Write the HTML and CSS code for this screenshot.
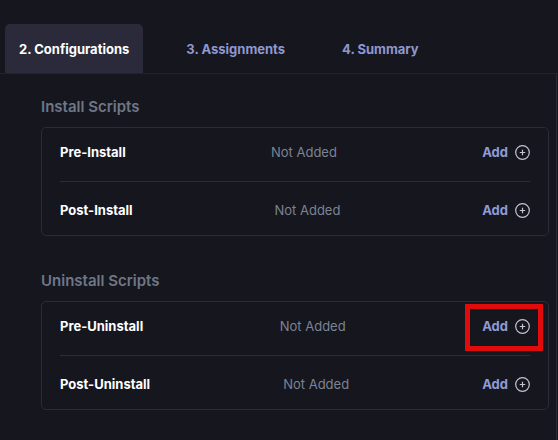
FILE: index.html
```html
<!DOCTYPE html>
<html>
<head>
<meta charset="utf-8">
<link rel="stylesheet" href="styles.css">
</head>
<body>
<div class="page">
  <nav class="tabs">
    <div class="tab active">2. Configurations</div>
    <div class="tab">3. Assignments</div>
    <div class="tab">4. Summary</div>
  </nav>
  <main class="content">
    <section class="section">
      <h2 class="section-title">Install Scripts</h2>
      <div class="card">
        <div class="row">
          <span class="label">Pre-Install</span>
          <span class="status">Not Added</span>
          <span class="add">Add
            <svg class="plus" width="15" height="15" viewBox="0 0 15 15"><circle cx="7.5" cy="7.5" r="6.8" fill="none" stroke="currentColor" stroke-width="1.2"/><path d="M7.5 4.8v5.4M4.8 7.5h5.4" stroke="currentColor" stroke-width="1.2"/></svg>
          </span>
        </div>
        <div class="divider"></div>
        <div class="row">
          <span class="label">Post-Install</span>
          <span class="status">Not Added</span>
          <span class="add">Add
            <svg class="plus" width="15" height="15" viewBox="0 0 15 15"><circle cx="7.5" cy="7.5" r="6.8" fill="none" stroke="currentColor" stroke-width="1.2"/><path d="M7.5 4.8v5.4M4.8 7.5h5.4" stroke="currentColor" stroke-width="1.2"/></svg>
          </span>
        </div>
      </div>
    </section>
    <section class="section second">
      <h2 class="section-title">Uninstall Scripts</h2>
      <div class="card">
        <div class="row">
          <span class="label">Pre-Uninstall</span>
          <span class="status">Not Added</span>
          <span class="add highlighted">Add
            <svg class="plus" width="15" height="15" viewBox="0 0 15 15"><circle cx="7.5" cy="7.5" r="6.8" fill="none" stroke="currentColor" stroke-width="1.2"/><path d="M7.5 4.8v5.4M4.8 7.5h5.4" stroke="currentColor" stroke-width="1.2"/></svg>
          </span>
        </div>
        <div class="divider"></div>
        <div class="row">
          <span class="label">Post-Uninstall</span>
          <span class="status">Not Added</span>
          <span class="add">Add
            <svg class="plus" width="15" height="15" viewBox="0 0 15 15"><circle cx="7.5" cy="7.5" r="6.8" fill="none" stroke="currentColor" stroke-width="1.2"/><path d="M7.5 4.8v5.4M4.8 7.5h5.4" stroke="currentColor" stroke-width="1.2"/></svg>
          </span>
        </div>
      </div>
    </section>
  </main>
</div>
</body>
</html>
```
FILE: styles.css
```css
* { box-sizing: border-box; }
html, body {
  margin: 0;
  padding: 0;
  background: #16161f;
  height: 100%;
}
body {
  font-family: "Inter", "Noto Sans", sans-serif;
  overflow: hidden;
}
.page {
  width: 558px;
  height: 440px;
}
.tabs {
  display: flex;
  gap: 29px;
  padding: 24px 0 0 5px;
  height: 74px;
  border-bottom: 1px solid #23232e;
}
.tab {
  height: 49px;
  padding: 0 14px;
  display: flex;
  align-items: center;
  font-size: 13px;
  font-weight: 700;
  color: #8e98cf;
  border-radius: 5px 5px 0 0;
}
.tab.active {
  background: #2a2a3b;
  color: #ffffff;
}
.content {
  width: 557px;
  height: 366px;
  border-right: 1px solid #2a2a36;
  padding: 22px 7px 0 41px;
}
.section-title {
  margin: 0;
  font-size: 15px;
  line-height: 22px;
  font-weight: 600;
  color: #6f7787;
}
.second { margin-top: 34px; }
.card {
  margin-top: 9px;
  border: 1px solid #2b2b39;
  border-radius: 5px;
  padding: 14px 18px 15px;
}
.row {
  display: flex;
  justify-content: space-between;
  align-items: center;
  height: 20px;
}
.divider {
  height: 1px;
  background: #2b2b39;
  margin: 19px 0 18px;
}
.label {
  font-size: 13px;
  font-weight: 700;
  color: #ffffff;
}
.status {
  font-size: 13px;
  font-weight: 400;
  color: #7b8494;
}
.add {
  position: relative;
  display: flex;
  align-items: center;
  gap: 7px;
  font-size: 13px;
  font-weight: 700;
  color: #8d9bd6;
}
.plus { color: #c3c5d2; }
.highlighted::after {
  content: "";
  position: absolute;
  left: -17px;
  right: -13px;
  top: -14px;
  bottom: -17px;
  border: 5px solid #e00c0c;
}
```
